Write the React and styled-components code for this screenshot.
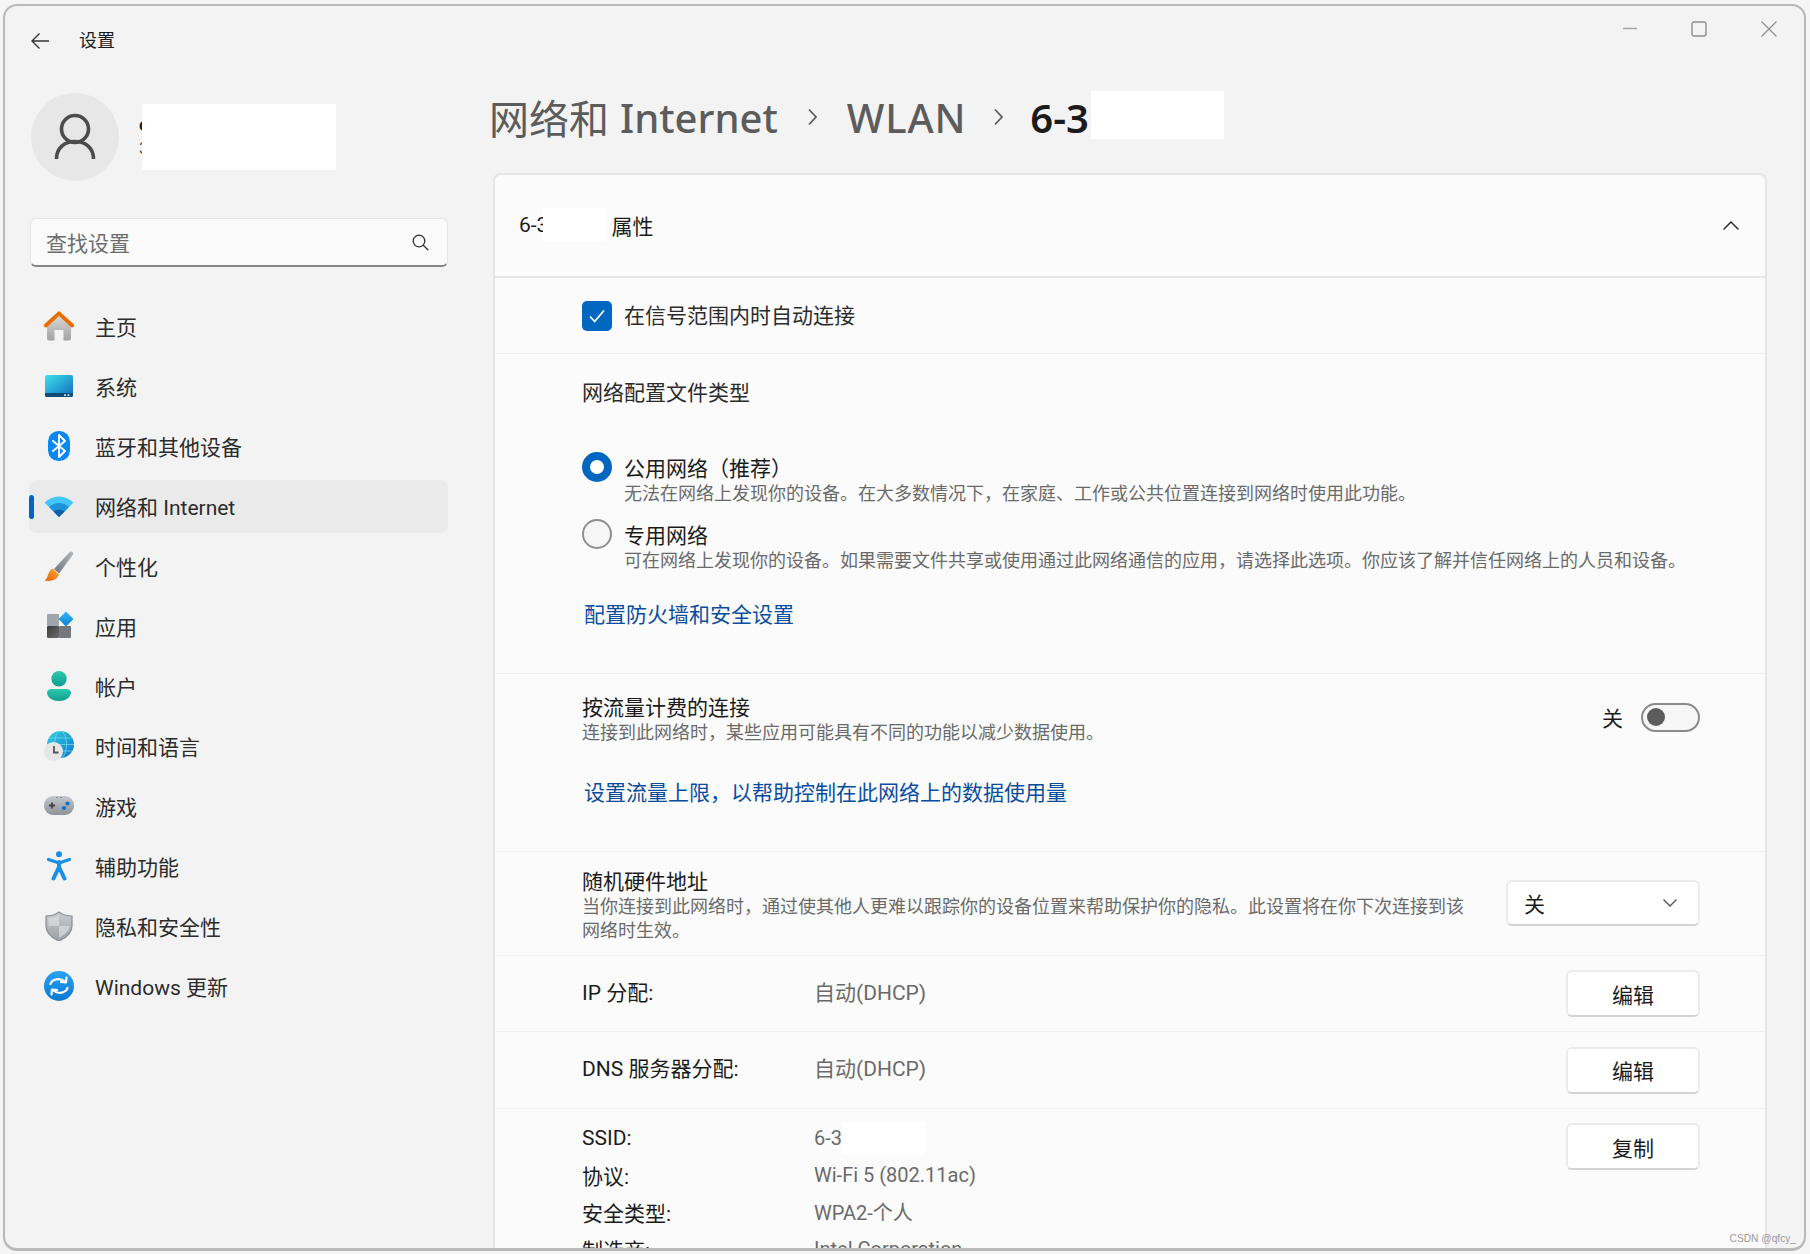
import React from 'react';
import styled, { createGlobalStyle } from 'styled-components';

const GlobalStyle = createGlobalStyle`
  html, body {
    margin: 0;
    padding: 0;
    background: #f5f5f5;
    overflow: hidden;
  }
  * {
    box-sizing: border-box;
  }
  body {
    font-family: Roboto, "Noto Sans CJK SC", sans-serif;
    color: #1b1b1b;
  }
`;

const Page = styled.div`
  width: 1810px;
  height: 1254px;
  padding: 4px 3px 3px;
`;

const Window = styled.div`
  position: relative;
  width: 1803px;
  height: 1247px;
  display: flex;
  flex-direction: column;
  overflow: hidden;
  background: #f3f3f3;
  border: 2px solid #b9b9b9;
  border-bottom-width: 3px;
  border-radius: 14px;
`;

const TitleBar = styled.header`
  height: 70px;
  flex-shrink: 0;
  display: flex;
  justify-content: space-between;
  align-items: flex-start;
`;

const TitleLeft = styled.div`
  height: 70px;
  padding-left: 25px;
  display: flex;
  align-items: center;
  gap: 29px;
`;

const AppName = styled.span`
  font-size: 18px;
  line-height: 24px;
`;

const WindowControls = styled.div`
  display: flex;
  gap: 54px;
  padding: 15px 27px 0 0;
`;

const Body = styled.div`
  flex: 1;
  min-height: 0;
  display: flex;
`;

const Sidebar = styled.aside`
  width: 484px;
  flex-shrink: 0;
  padding: 17px 0 0 24px;
`;

const Profile = styled.div`
  position: relative;
  display: flex;
  align-items: center;
  gap: 20px;
  margin-left: 2px;
`;

const Avatar = styled.div`
  width: 88px;
  height: 88px;
  border-radius: 50%;
  background: #e7e7e7;
  display: flex;
  align-items: center;
  justify-content: center;
`;

const ProfileText = styled.div`
  display: flex;
  flex-direction: column;
`;

const ProfileName = styled.span`
  font-size: 18px;
  line-height: 24px;
  font-weight: 600;
`;

const ProfileMail = styled.span`
  font-size: 16px;
  line-height: 24px;
  color: #555;
`;

const ProfileMask = styled.div`
  position: absolute;
  left: 111px;
  top: 11px;
  width: 194px;
  height: 66px;
  background: #ffffff;
`;

const SearchBox = styled.div`
  width: 418px;
  height: 49px;
  margin: 37px 0 0 1px;
  padding: 0 18px 0 15px;
  display: flex;
  align-items: center;
  justify-content: space-between;
  background: #fbfbfb;
  border: 1px solid #e5e5e5;
  border-bottom: 2px solid #868686;
  border-radius: 6px;
  font-size: 21px;
  color: #6d6d6d;
`;

const Nav = styled.nav`
  margin-top: 33px;
  display: flex;
  flex-direction: column;
  gap: 7px;
`;

const NavItem = styled.div`
  position: relative;
  width: 419px;
  height: 53px;
  padding-left: 15px;
  display: flex;
  align-items: center;
  gap: 21px;
  border-radius: 8px;
  font-size: 21px;
  color: #2b2b2b;
  background: ${(p) => (p.$active ? '#eaeaea' : 'transparent')};

  ${(p) =>
    p.$active &&
    `
    &::before {
      content: '';
      position: absolute;
      left: 0;
      top: 15px;
      width: 5px;
      height: 24px;
      border-radius: 3px;
      background: #0067c0;
    }
  `}
`;

const NavLabel = styled.span`
  margin-top: -2px;
`;

const NavIcon = styled.svg`
  width: 30px;
  height: 30px;
  flex-shrink: 0;
  margin-top: -2px;
`;

const Main = styled.main`
  flex: 1;
  min-width: 0;
`;

const Breadcrumb = styled.h1`
  height: 56px;
  margin: 13px 0 0;
  display: flex;
  align-items: center;
  font-family: "Noto Sans", "Noto Sans CJK SC", sans-serif;
  font-size: 40px;
  font-weight: 500;
  color: #5c5c5c;
`;

const CrumbCjk = styled.span`
  font-weight: 400;
  margin-right: 11px;
`;

const CrumbWlan = styled.span`
  letter-spacing: 0.8px;
`;

const CrumbSep = styled.svg`
  width: 12px;
  height: 20px;
  margin: 0 ${(p) => p.$right}px 0 ${(p) => p.$left}px;
`;

const CrumbCurrent = styled.span`
  font-weight: 600;
  color: #1b1b1b;
`;

const CrumbMask = styled.span`
  display: inline-block;
  width: 133px;
  height: 48px;
  margin: -4px 0 0 2px;
  background: #ffffff;
`;

const Card = styled.section`
  width: 1274px;
  margin: 28px 0 0 4px;
  background: #fbfbfb;
  border: 2px solid #e5e5e5;
  border-bottom: none;
  border-radius: 8px 8px 0 0;
`;

const CardHeader = styled.div`
  height: 103px;
  padding: 0 25px 2px 24px;
  display: flex;
  align-items: center;
  justify-content: space-between;
  border-bottom: 2px solid #e5e5e5;
  font-size: 21px;
`;

const HeaderTitle = styled.div`
  display: flex;
  align-items: center;
`;

const HeaderMask = styled.span`
  width: 63px;
  height: 33px;
  margin: 0 5px 0 -5px;
  background: #ffffff;
`;

const Section = styled.div`
  padding: ${(p) => p.$padding || '0'};
  border-bottom: 1px solid #efefef;
  height: ${(p) => p.$height}px;
`;

const SplitSection = styled(Section)`
  display: flex;
  justify-content: space-between;
  align-items: flex-start;
`;

const CheckRow = styled.div`
  height: 76px;
  padding-left: 87px;
  display: flex;
  align-items: center;
  gap: 12px;
  border-bottom: 1px solid #efefef;
  font-size: 21px;
  color: #2b2b2b;
`;

const CheckLabel = styled.span`
  margin-top: -3px;
`;

const CheckBox = styled.span`
  width: 30px;
  height: 30px;
  border-radius: 5px;
  background: #0067c0;
  display: flex;
  align-items: center;
  justify-content: center;
`;

const SectionTitle = styled.div`
  font-size: 21px;
  line-height: 28px;
  color: #2b2b2b;
`;

const RadioGroup = styled.div`
  margin-top: 49px;
  display: flex;
  flex-direction: column;
  gap: 17px;
`;

const RadioRow = styled.div`
  display: flex;
  gap: 12px;
`;

const Radio = styled.span`
  width: 30px;
  height: 30px;
  margin-top: -4px;
  flex-shrink: 0;
  border-radius: 50%;
  background: ${(p) => (p.$checked ? '#ffffff' : '#f6f6f6')};
  border: ${(p) => (p.$checked ? '8px solid #0067c0' : '2px solid #8f8f8f')};
`;

const RowLabel = styled.div`
  font-size: 21px;
  line-height: 26px;
  color: #1b1b1b;
`;

const Hint = styled.div`
  font-size: 18px;
  line-height: 24px;
  color: #6a6a6a;
  max-width: ${(p) => (p.$narrow ? '890px' : 'none')};
`;

const LinkText = styled.a`
  display: block;
  margin: ${(p) => p.$margin} 0 0 2px;
  font-size: 21px;
  line-height: 28px;
  color: #0a4d9e;
`;

const ToggleWrap = styled.div`
  display: flex;
  align-items: center;
  gap: 18px;
  margin-top: 7px;
  font-size: 21px;
`;

const Toggle = styled.span`
  width: 59px;
  height: 29px;
  padding-left: 4px;
  display: flex;
  align-items: center;
  border: 2px solid #8a8a8a;
  border-radius: 15px;
  background: #f6f6f6;
`;

const ToggleKnob = styled.span`
  width: 18px;
  height: 18px;
  border-radius: 50%;
  background: #5c5c5c;
`;

const Dropdown = styled.div`
  width: 194px;
  height: 46px;
  margin-top: 11px;
  padding: 0 20px 0 16px;
  display: flex;
  align-items: center;
  justify-content: space-between;
  background: #ffffff;
  border: 2px solid #ebebeb;
  border-bottom-color: #d4d4d4;
  border-radius: 6px;
  font-size: 21px;
`;

const PropRow = styled.div`
  height: ${(p) => p.$height}px;
  padding: 0 65px 0 87px;
  display: flex;
  align-items: center;
  border-bottom: 1px solid #efefef;
`;

const PropLabel = styled.div`
  width: 232px;
  flex-shrink: 0;
  font-size: 21px;
  margin-top: -6px;
`;

const PropValue = styled.div`
  flex: 1;
  font-size: 21px;
  color: #6a6a6a;
  margin-top: -6px;
`;

const ActionButton = styled.button`
  width: 134px;
  height: 47px;
  flex-shrink: 0;
  background: #ffffff;
  border: 2px solid #ebebeb;
  border-bottom-color: #d4d4d4;
  border-radius: 6px;
  font-family: inherit;
  font-size: 21px;
  color: #1b1b1b;
`;

const InfoBlock = styled.div`
  padding: 10px 65px 0 87px;
  display: flex;
  justify-content: space-between;
  align-items: flex-start;
`;

const InfoGrid = styled.dl`
  margin: 0;
  display: grid;
  grid-template-columns: 232px auto;
  grid-auto-rows: 37px;
  align-items: center;
  font-size: 21px;
`;

const InfoKey = styled.dt`
  margin: 0;
`;

const InfoVal = styled.dd`
  margin: 0;
  display: flex;
  align-items: center;
  font-size: 20px;
  color: #6a6a6a;
`;

const SsidMask = styled.span`
  width: 83px;
  height: 32px;
  background: #ffffff;
`;

const InfoButton = styled(ActionButton)`
  margin-top: 4px;
`;

const Watermark = styled.div`
  position: absolute;
  right: 8px;
  bottom: 4px;
  font-family: "Liberation Sans", Arial, sans-serif;
  font-size: 10.2px;
  color: #9a9a9a;
`;

const ChevronUpWrap = styled.span`
  display: flex;
  margin-top: 2px;
`;

/* window glyphs */
const BackArrow = () => (
  <svg width="20" height="18" viewBox="0 0 20 18" fill="none" stroke="#333" strokeWidth="1.4">
    <path d="M19 9H2M9.5 1.5 2 9l7.5 7.5" />
  </svg>
);

const Minimize = () => (
  <svg width="16" height="16" viewBox="0 0 16 16" stroke="#a5a5a5" strokeWidth="1.4">
    <path d="M2 7.5h14" />
  </svg>
);

const Maximize = () => (
  <svg width="16" height="16" viewBox="0 0 16 16" fill="none" stroke="#8e8e8e" strokeWidth="1.4">
    <rect x="1" y="1" width="14" height="14" rx="2" />
  </svg>
);

const CloseX = () => (
  <svg width="16" height="16" viewBox="0 0 16 16" stroke="#8e8e8e" strokeWidth="1.2">
    <path d="M0.5 0.5l15 15M15.5 0.5l-15 15" />
  </svg>
);

const SearchGlyph = () => (
  <svg width="17" height="17" viewBox="0 0 17 17" fill="none" stroke="#333" strokeWidth="1.3">
    <circle cx="7" cy="7" r="5.8" />
    <path d="M11 11l5.3 5.3" />
  </svg>
);

const UserGlyph = () => (
  <svg width="88" height="88" viewBox="0 0 88 88" fill="none" stroke="#4c4c4c" strokeWidth="3.6">
    <circle cx="44" cy="36" r="13.5" />
    <path d="M25.5 66c0-11 8-17.5 18.500-17.500S62.500 55 62.500 66" />
  </svg>
);

const ChevronRight = ({ left, right }) => (
  <CrumbSep $left={left} $right={right} viewBox="0 0 12 20" fill="none" stroke="#5c5c5c" strokeWidth="1.8">
    <path d="M2 2.500l7 7.500-7 7.500" />
  </CrumbSep>
);

const ChevronUp = () => (
  <ChevronUpWrap>
    <svg width="18" height="11" viewBox="0 0 18 11" fill="none" stroke="#222" strokeWidth="1.4">
      <path d="M1.500 9.500 9 2l7.500 7.500" />
    </svg>
  </ChevronUpWrap>
);

const ChevronDown = () => (
  <svg width="16" height="10" viewBox="0 0 16 10" fill="none" stroke="#555" strokeWidth="1.400">
    <path d="M1.500 1.500 8 8l6.500-6.500" />
  </svg>
);

const CheckMark = () => (
  <svg width="18" height="16" viewBox="0 0 18 16" fill="none" stroke="#fff" strokeWidth="1.8">
    <path d="M2 8.500l4.700 5L16 2.500" />
  </svg>
);

/* colour icons of the navigation pane */
const HomeIcon = () => (
  <NavIcon viewBox="0 0 30 30">
    <defs>
      <linearGradient id="homeBody" x1="0" y1="0" x2="0" y2="1">
        <stop offset="0" stopColor="#dcdcdc" />
        <stop offset="1" stopColor="#a2a2a2" />
      </linearGradient>
    </defs>
    <path d="M3 14 15 3l12 11v13.500a2 2 0 0 1-2 2h-5.500V19h-9v10.500H5a2 2 0 0 1-2-2z" fill="url(#homeBody)" />
    <path d="M1.800 14.500 15 2.300l13.200 12.200" fill="none" stroke="#e76f00" strokeWidth="3.800" strokeLinecap="round" strokeLinejoin="round" />
  </NavIcon>
);

const SystemIcon = () => (
  <NavIcon viewBox="0 0 30 30">
    <defs>
      <linearGradient id="sysBody" x1="0" y1="0" x2="1" y2="1">
        <stop offset="0" stopColor="#3fe0ea" />
        <stop offset="1" stopColor="#0f6cc0" />
      </linearGradient>
    </defs>
    <rect x="1" y="4" width="28" height="22" rx="2" fill="url(#sysBody)" />
    <path d="M1 22h28v2a2 2 0 0 1-2 2H3a2 2 0 0 1-2-2z" fill="#0f4d78" />
    <rect x="20" y="23.300" width="2" height="1.600" fill="#cfe8f5" />
    <rect x="23.500" y="23.300" width="2" height="1.600" fill="#cfe8f5" />
  </NavIcon>
);

const BluetoothIcon = () => (
  <NavIcon viewBox="0 0 30 30">
    <rect x="4" y="0" width="22" height="30" rx="10.500" fill="#0a88f2" />
    <path d="M9 10 21 20l-6 6V4l6 6L9 20" fill="none" stroke="#fff" strokeWidth="2" strokeLinejoin="round" strokeLinecap="round" />
  </NavIcon>
);

const WifiIcon = () => (
  <NavIcon viewBox="0 0 30 30">
    <path d="M0.500 11.500C9 3.500 21 3.500 29.500 11.500L15 26z" fill="#43c6f7" />
    <path d="M5 16C11 10.500 19 10.500 25 16L15 26z" fill="#1d93dc" />
    <path d="M9.500 20.500C13 18 17 18 20.500 20.500L15 26z" fill="#0c5da6" />
  </NavIcon>
);

const BrushIcon = () => (
  <NavIcon viewBox="0 0 30 30">
    <defs>
      <linearGradient id="brushHandle" x1="0" y1="1" x2="1" y2="0">
        <stop offset="0" stopColor="#70767c" />
        <stop offset="1" stopColor="#b4b8bc" />
      </linearGradient>
      <linearGradient id="brushTip" x1="1" y1="0" x2="0" y2="1">
        <stop offset="0" stopColor="#fbb03b" />
        <stop offset="1" stopColor="#e85d04" />
      </linearGradient>
    </defs>
    <path d="M26 .8c1.800-1.200 4 .8 3 2.800L15 22.500 10 18z" fill="url(#brushHandle)" />
    <path d="M8.500 17.500 15 23.500C14 28 8 31 .5 29.500 4.500 27.500 3.500 20 8.500 17.500z" fill="url(#brushTip)" />
  </NavIcon>
);

const AppsIcon = () => (
  <NavIcon viewBox="0 0 30 30">
    <defs>
      <linearGradient id="appsDark" x1="0" y1="0" x2="1" y2="1">
        <stop offset="0" stopColor="#3b3b3b" />
        <stop offset="1" stopColor="#6e6e6e" />
      </linearGradient>
      <linearGradient id="appsGem" x1="0" y1="0" x2="0" y2="1">
        <stop offset="0" stopColor="#36b8f2" />
        <stop offset="1" stopColor="#0a7fd8" />
      </linearGradient>
    </defs>
    <rect x="3" y="3" width="12" height="12" rx="1" fill="#9fa5ad" />
    <rect x="3" y="15" width="12" height="12" rx="1" fill="url(#appsDark)" />
    <rect x="15" y="15" width="12" height="12" rx="1" fill="#74787d" />
    <path d="M22 .5 29.500 8 22 15.500 14.500 8z" fill="url(#appsGem)" />
  </NavIcon>
);

const AccountIcon = () => (
  <NavIcon viewBox="0 0 30 30">
    <defs>
      <linearGradient id="acct" x1="0" y1="0" x2="0" y2="1">
        <stop offset="0" stopColor="#2bc8ad" />
        <stop offset="1" stopColor="#0f9f8e" />
      </linearGradient>
    </defs>
    <circle cx="15" cy="7.800" r="7.700" fill="url(#acct)" />
    <path d="M3 21.500C3 19.500 5 18 8 18h14c3 0 5 1.500 5 3.500C27 26.500 21 30 15 30S3 26.500 3 21.500z" fill="url(#acct)" />
  </NavIcon>
);

const TimeIcon = () => (
  <NavIcon viewBox="0 0 30 30">
    <defs>
      <linearGradient id="globe" x1="0" y1="0" x2="1" y2="1">
        <stop offset="0" stopColor="#30d2de" />
        <stop offset="1" stopColor="#0d78cf" />
      </linearGradient>
    </defs>
    <circle cx="16.500" cy="13.500" r="13.500" fill="url(#globe)" />
    <g fill="none" stroke="#8fdcf0" strokeWidth=".8" opacity=".8">
      <ellipse cx="16.500" cy="13.500" rx="6" ry="13.500" />
      <path d="M3 13.500h27M5 7h23M5 20h23" />
    </g>
    <circle cx="9.500" cy="20.500" r="9.500" fill="#e6e6e6" />
    <path d="M10 15v6.500h4.500" fill="none" stroke="#555" strokeWidth="1.800" />
  </NavIcon>
);

const GameIcon = () => (
  <NavIcon viewBox="0 0 30 30">
    <defs>
      <linearGradient id="pad" x1="0" y1="0" x2="0" y2="1">
        <stop offset="0" stopColor="#c4c7cb" />
        <stop offset="1" stopColor="#8e9399" />
      </linearGradient>
    </defs>
    <rect x="0" y="5" width="30" height="19" rx="9" fill="url(#pad)" />
    <path d="M8 11.500v6M5 14.500h6" stroke="#3f4347" strokeWidth="1.800" />
    <circle cx="23.500" cy="12.500" r="2.100" fill="#0a70d0" />
    <circle cx="20" cy="17" r="2.100" fill="#0a70d0" />
    <path d="M12.500 6.500h1M16.500 6.500h1" stroke="#555" strokeWidth="1" />
  </NavIcon>
);

const AccessIcon = () => (
  <NavIcon viewBox="0 0 30 30">
    <circle cx="15" cy="3.200" r="3" fill="#1b8fe6" />
    <path d="M4.500 8.500 15 12l10.500-3.500" fill="none" stroke="#1b8fe6" strokeWidth="3.200" strokeLinecap="round" strokeLinejoin="round" />
    <path d="M15 11v6.500M15 16 9.500 27.500M15 16l5.500 11.500" fill="none" stroke="#1b8fe6" strokeWidth="4" strokeLinecap="round" />
  </NavIcon>
);

const ShieldIcon = () => (
  <NavIcon viewBox="0 0 30 30">
    <defs>
      <linearGradient id="shield" x1="0" y1="0" x2="0" y2="1">
        <stop offset="0" stopColor="#c9ccd0" />
        <stop offset="1" stopColor="#9a9fa5" />
      </linearGradient>
    </defs>
    <path d="M15 1c4 3 9 4 13 4v10c0 7-6 12-13 15C8 27 2 22 2 15V5c4 0 9-1 13-4z" fill="url(#shield)" stroke="#8a8f95" strokeWidth="1.200" />
    <path d="M15 4v11H4.500V7C8 7 12 6 15 4zM15 15h10.500c-.5 5-5 9-10.500 12z" fill="#dcdee0" opacity=".7" />
  </NavIcon>
);

const UpdateIcon = () => (
  <NavIcon viewBox="0 0 30 30">
    <defs>
      <linearGradient id="upd" x1="0" y1="0" x2="0" y2="1">
        <stop offset="0" stopColor="#2ba2f2" />
        <stop offset="1" stopColor="#0a7ad4" />
      </linearGradient>
    </defs>
    <circle cx="15" cy="15" r="15" fill="url(#upd)" />
    <g fill="none" stroke="#fff" strokeWidth="2.200" strokeLinecap="round" strokeLinejoin="round">
      <path d="M6.500 13C8 8.500 15.500 6 21.500 11" />
      <path d="M22.500 6.500l-.5 5-5-.5" />
      <path d="M23.500 17C22 21.500 14.500 24 8.500 19" />
      <path d="M7.500 23.500l.5-5 5 .5" />
    </g>
  </NavIcon>
);

const navItems = [
  { label: '主页', Icon: HomeIcon },
  { label: '系统', Icon: SystemIcon },
  { label: '蓝牙和其他设备', Icon: BluetoothIcon },
  { label: '网络和 Internet', Icon: WifiIcon, active: true },
  { label: '个性化', Icon: BrushIcon },
  { label: '应用', Icon: AppsIcon },
  { label: '帐户', Icon: AccountIcon },
  { label: '时间和语言', Icon: TimeIcon },
  { label: '游戏', Icon: GameIcon },
  { label: '辅助功能', Icon: AccessIcon },
  { label: '隐私和安全性', Icon: ShieldIcon },
  { label: 'Windows 更新', Icon: UpdateIcon },
];

const App = () => (
  <Page>
    <GlobalStyle />
    <Window>
      <TitleBar>
        <TitleLeft>
          <BackArrow />
          <AppName>设置</AppName>
        </TitleLeft>
        <WindowControls>
          <Minimize />
          <Maximize />
          <CloseX />
        </WindowControls>
      </TitleBar>
      <Body>
        <Sidebar>
          <Profile>
            <Avatar>
              <UserGlyph />
            </Avatar>
            <ProfileText>
              <ProfileName>c</ProfileName>
              <ProfileMail>3</ProfileMail>
            </ProfileText>
            <ProfileMask />
          </Profile>
          <SearchBox>
            查找设置
            <SearchGlyph />
          </SearchBox>
          <Nav>
            {navItems.map(({ label, Icon, active }) => (
              <NavItem key={label} $active={active}>
                <Icon />
                <NavLabel>{label}</NavLabel>
              </NavItem>
            ))}
          </Nav>
        </Sidebar>
        <Main>
          <Breadcrumb>
            <CrumbCjk>网络和</CrumbCjk>
            Internet
            <ChevronRight left={29} right={28} />
            <CrumbWlan>WLAN</CrumbWlan>
            <ChevronRight left={27} right={25} />
            <CrumbCurrent>6-3</CrumbCurrent>
            <CrumbMask />
          </Breadcrumb>
          <Card>
            <CardHeader>
              <HeaderTitle>
                6-3
                <HeaderMask />
                属性
              </HeaderTitle>
              <ChevronUp />
            </CardHeader>
            <CheckRow>
              <CheckBox>
                <CheckMark />
              </CheckBox>
              <CheckLabel>在信号范围内时自动连接</CheckLabel>
            </CheckRow>
            <Section $height={320} $padding="25px 0 0 87px">
              <SectionTitle>网络配置文件类型</SectionTitle>
              <RadioGroup>
                <RadioRow>
                  <Radio $checked />
                  <div>
                    <RowLabel>公用网络（推荐）</RowLabel>
                    <Hint>无法在网络上发现你的设备。在大多数情况下，在家庭、工作或公共位置连接到网络时使用此功能。</Hint>
                  </div>
                </RadioRow>
                <RadioRow>
                  <Radio />
                  <div>
                    <RowLabel>专用网络</RowLabel>
                    <Hint>可在网络上发现你的设备。如果需要文件共享或使用通过此网络通信的应用，请选择此选项。你应该了解并信任网络上的人员和设备。</Hint>
                  </div>
                </RadioRow>
              </RadioGroup>
              <LinkText $margin="28px">配置防火墙和安全设置</LinkText>
            </Section>
            <SplitSection $height={178} $padding="21px 65px 0 87px">
              <div>
                <RowLabel>按流量计费的连接</RowLabel>
                <Hint>连接到此网络时，某些应用可能具有不同的功能以减少数据使用。</Hint>
                <LinkText $margin="34px">设置流量上限，以帮助控制在此网络上的数据使用量</LinkText>
              </div>
              <ToggleWrap>
                关
                <Toggle>
                  <ToggleKnob />
                </Toggle>
              </ToggleWrap>
            </SplitSection>
            <SplitSection $height={104} $padding="17px 65px 0 87px">
              <div>
                <RowLabel>随机硬件地址</RowLabel>
                <Hint $narrow>当你连接到此网络时，通过使其他人更难以跟踪你的设备位置来帮助保护你的隐私。此设置将在你下次连接到该网络时生效。</Hint>
              </div>
              <Dropdown>
                关
                <ChevronDown />
              </Dropdown>
            </SplitSection>
            <PropRow $height={76}>
              <PropLabel>IP 分配:</PropLabel>
              <PropValue>自动(DHCP)</PropValue>
              <ActionButton>编辑</ActionButton>
            </PropRow>
            <PropRow $height={77}>
              <PropLabel>DNS 服务器分配:</PropLabel>
              <PropValue>自动(DHCP)</PropValue>
              <ActionButton>编辑</ActionButton>
            </PropRow>
            <InfoBlock>
              <InfoGrid>
                <InfoKey>SSID:</InfoKey>
                <InfoVal>
                  6-3
                  <SsidMask />
                </InfoVal>
                <InfoKey>协议:</InfoKey>
                <InfoVal>Wi-Fi 5 (802.11ac)</InfoVal>
                <InfoKey>安全类型:</InfoKey>
                <InfoVal>WPA2-个人</InfoVal>
                <InfoKey>制造商:</InfoKey>
                <InfoVal>Intel Corporation</InfoVal>
              </InfoGrid>
              <InfoButton>复制</InfoButton>
            </InfoBlock>
          </Card>
        </Main>
      </Body>
      <Watermark>CSDN @qfcy_</Watermark>
    </Window>
  </Page>
);

export default App;
